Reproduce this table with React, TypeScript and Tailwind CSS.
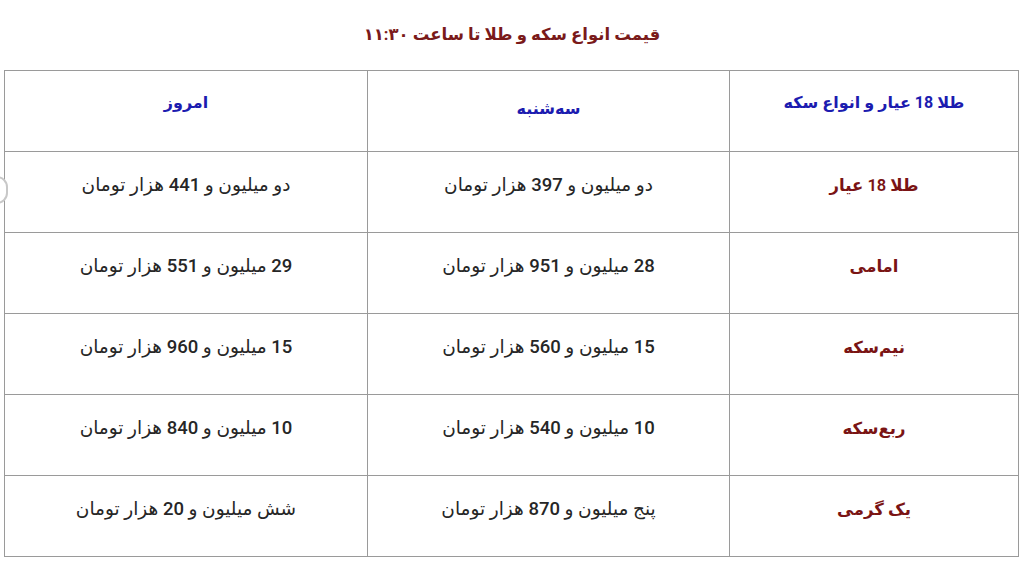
const rows = [
  { label: 'طلا 18 عیار', tue: 'دو میلیون و 397 هزار تومان', today: 'دو میلیون و 441 هزار تومان' },
  { label: 'امامی', tue: '28 میلیون و 951 هزار تومان', today: '29 میلیون و 551 هزار تومان' },
  { label: 'نیم‌سکه', tue: '15 میلیون و 560 هزار تومان', today: '15 میلیون و 960 هزار تومان' },
  { label: 'ربع‌سکه', tue: '10 میلیون و 540 هزار تومان', today: '10 میلیون و 840 هزار تومان' },
  { label: 'یک گرمی', tue: 'پنج میلیون و 870 هزار تومان', today: 'شش میلیون و 20 هزار تومان' },
];

export default function App() {
  return (
    <div
      dir="rtl"
      className="relative w-[1024px] h-[562px] bg-white overflow-hidden"
      style={{ fontFamily: "Roboto, 'DejaVu Sans', sans-serif" }}
    >
      {/* half-visible round button at the left edge */}
      <div className="absolute left-[-14px] top-[176px] w-[22px] h-[28px] rounded-full border-2 border-[#c8c8c8] bg-white" />

      <h1 className="h-[70px] pt-[23px] text-center text-[16.5px] font-bold text-[#7a1a1a]">
        قیمت انواع سکه و طلا تا ساعت ۱۱:۳۰
      </h1>

      <table className="mr-[5px] w-[1014px] border-collapse table-fixed">
        <colgroup>
          <col className="w-[289px]" />
          <col className="w-[362px]" />
          <col className="w-[363px]" />
        </colgroup>
        <thead>
          <tr className="h-[81px]">
            <th className="border border-[#9a9a9a] pb-[16px] text-[16px] font-bold text-[#1c1cb0]">طلا 18 عیار و انواع سکه</th>
            <th className="border border-[#9a9a9a] pb-[4px] text-[16px] font-bold text-[#1c1cb0]">سه‌شنبه</th>
            <th className="border border-[#9a9a9a] pb-[16px] text-[16px] font-bold text-[#1c1cb0]">امروز</th>
          </tr>
        </thead>
        <tbody>
          {rows.map((r) => (
            <tr key={r.label} className="h-[81px]">
              <td className="border border-[#9a9a9a] pb-[12px] text-center text-[16.5px] font-semibold text-[#7a1414]">{r.label}</td>
              <td className="border border-[#9a9a9a] pb-[12px] text-center text-[18.5px] font-medium text-[#262626]">{r.tue}</td>
              <td className="border border-[#9a9a9a] pb-[12px] text-center text-[18.5px] font-medium text-[#262626]">{r.today}</td>
            </tr>
          ))}
        </tbody>
      </table>
    </div>
  );
}
